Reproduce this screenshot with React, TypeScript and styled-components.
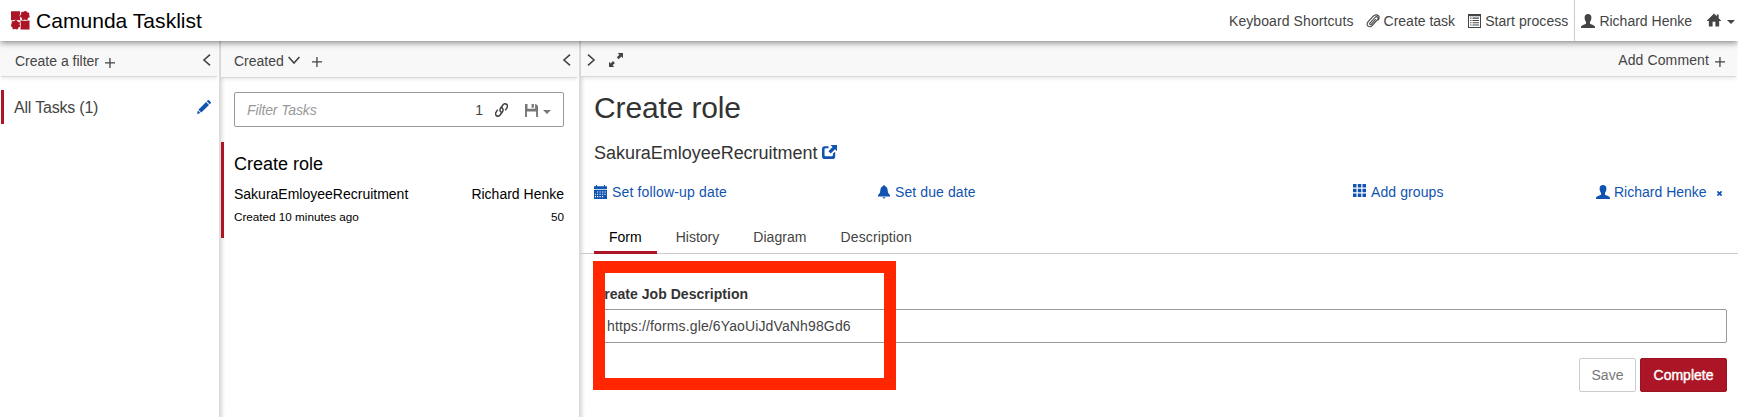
import React from 'react';
import styled, { createGlobalStyle } from 'styled-components';

const GlobalStyle = createGlobalStyle`
  *, *::before, *::after { box-sizing: border-box; }
  body {
    margin: 0;
    overflow: hidden;
    background: #fff;
    color: #333;
    font: 14px/20px "Liberation Sans", Arial, Helvetica, sans-serif;
  }
  h1, h2, h3, p { margin: 0; font-weight: normal; }
  button, input { font: inherit; }
`;

const BLUE = '#1153b0';
const RED = '#ab1526';

const Page = styled.div`
  display: flex;
  flex-direction: column;
  height: 417px;
`;

const Header = styled.header`
  position: relative;
  z-index: 3;
  display: flex;
  justify-content: space-between;
  height: 41px;
  background: #fff;
  box-shadow: 0 1px 7px rgba(0, 0, 0, 0.55);
`;

const Brand = styled.div`
  display: flex;
  align-items: center;
  padding: 1px 0 0 11px;
  gap: 6px;
  color: #000;
  font-size: 21px;
  line-height: 24px;
  letter-spacing: 0.04px;
`;

const Nav = styled.nav`
  display: flex;
  padding-right: 3px;
  color: #444;
`;

const NavItem = styled.a<{ $left?: number; $gap?: number; $divided?: boolean; $spacing?: number }>`
  display: flex;
  align-items: center;
  height: 41px;
  padding-top: 1px;
  margin-left: ${(p) => p.$left ?? 0}px;
  gap: ${(p) => p.$gap ?? 4}px;
  letter-spacing: ${(p) => p.$spacing ?? 0}px;
  white-space: nowrap;
  ${(p) => p.$divided && 'border-left: 1px solid #ccc; padding-left: 6px;'}
`;

const Columns = styled.main`
  display: flex;
  flex: 1;
  min-height: 0;
`;

const Column = styled.section<{ $width?: number }>`
  display: flex;
  flex-direction: column;
  flex: ${(p) => (p.$width ? `0 0 ${p.$width}px` : '1 1 0')};
  min-width: 0;
  & + & {
    border-left: 1px solid #dcdcdc;
    box-shadow: inset 5px 0 5px -4px rgba(0, 0, 0, 0.22);
  }
`;

const Toolbar = styled.div<{ $height?: number; $left: number; $right: number }>`
  display: flex;
  align-items: center;
  flex: none;
  height: ${(p) => p.$height ?? 36}px;
  margin: 0 2px 0 1px;
  padding: 3px ${(p) => p.$right}px 0 ${(p) => p.$left}px;
  background: #f8f8f8;
  border-bottom: 1px solid #d9d9d9;
  box-shadow: 0 2px 3px rgba(0, 0, 0, 0.08);
  color: #444;
`;

const ToolbarText = styled.span<{ $top?: number; $spacing?: number }>`
  padding-top: ${(p) => p.$top ?? 0}px;
  letter-spacing: ${(p) => p.$spacing ?? 0}px;
`;

const Spacer = styled.span`
  flex: 1;
`;

const Glyph = styled.svg<{ $ml?: number; $top?: number }>`
  display: block;
  flex: none;
  margin-left: ${(p) => p.$ml ?? 0}px;
  margin-top: ${(p) => p.$top ?? 0}px;
  fill: currentColor;
`;

const FilterRow = styled.div`
  display: flex;
  align-items: center;
  height: 34px;
  margin: 13px 0 0 1px;
  padding: 1px 8px 0 10px;
  border-left: 3px solid ${RED};
  color: #444;
  font-size: 16px;
  letter-spacing: -0.2px;
`;

const EditIcon = styled.span`
  margin-left: auto;
  padding-bottom: 2px;
  color: ${BLUE};
`;

const SearchBox = styled.div`
  display: flex;
  align-items: center;
  flex: none;
  height: 35px;
  margin: 14px 15px 0 14px;
  padding: 1px 12px 0 12px;
  border: 1px solid #999;
  border-radius: 2px;
  color: #444;
`;

const Placeholder = styled.span`
  flex: 1;
  color: #999;
  font-style: italic;
  letter-spacing: -0.12px;
`;

const Task = styled.article`
  height: 96px;
  margin: 15px 15px 0 1px;
  padding-left: 10px;
  border-left: 3px solid ${RED};
  color: #000;
`;

const TaskTitle = styled.h3`
  padding-top: 11px;
  font-size: 18px;
  line-height: 23px;
`;

const TaskLine = styled.div<{ $small?: boolean }>`
  display: flex;
  justify-content: space-between;
  height: 22px;
  margin-top: ${(p) => (p.$small ? 1 : 7)}px;
  font-size: ${(p) => (p.$small ? 11.7 : 14)}px;
  line-height: 22px;
`;

const Title = styled.h1`
  padding: 13px 0 0 14px;
  color: #333;
  font-size: 30px;
  line-height: 36px;
  letter-spacing: -0.14px;
`;

const Process = styled.h2`
  display: flex;
  align-items: center;
  padding: 14px 0 0 14px;
  gap: 5px;
  font-size: 18px;
  line-height: 26px;
  letter-spacing: -0.03px;
`;

const MetaRow = styled.div`
  display: grid;
  grid-template-columns: 284px 475px 243px 1fr;
  height: 20px;
  margin: 16px 0 0 14px;
  color: ${BLUE};
`;

const Meta = styled.a<{ $gap?: number; $spacing?: number }>`
  display: flex;
  align-items: center;
  gap: ${(p) => p.$gap ?? 5}px;
  letter-spacing: ${(p) => p.$spacing ?? 0}px;
  white-space: nowrap;
`;

const Tabs = styled.div`
  display: flex;
  height: 34px;
  margin-top: 18px;
  padding-left: 14px;
  gap: 4px;
  border-bottom: 1px solid #ccc;
`;

const Tab = styled.button<{ $active?: boolean; $spacing?: number }>`
  height: 34px;
  padding: 3px 15px 0;
  border: 0;
  border-bottom: 3px solid ${(p) => (p.$active ? RED : 'transparent')};
  background: none;
  color: ${(p) => (p.$active ? '#000' : '#444')};
  letter-spacing: ${(p) => p.$spacing ?? 0}px;
  line-height: 20px;
`;

const Form = styled.form`
  position: relative;
  padding: 30px 11px 0 14px;
`;

const Label = styled.label`
  display: block;
  font-weight: bold;
  line-height: 20px;
  letter-spacing: 0.04px;
`;

const Field = styled.input`
  display: block;
  width: 100%;
  height: 34px;
  margin-top: 5px;
  padding: 0 12px;
  border: 1px solid #999;
  border-radius: 2px;
  background: #fff;
  color: #444;
  letter-spacing: 0.13px;
`;

const Actions = styled.div`
  display: flex;
  justify-content: flex-end;
  margin-top: 15px;
  gap: 4px;
`;

const Button = styled.button<{ $primary?: boolean }>`
  width: ${(p) => (p.$primary ? 87 : 57)}px;
  height: 34px;
  padding: 0;
  border: 1px solid ${(p) => (p.$primary ? '#9c1423' : '#ccc')};
  border-radius: 2px;
  background: ${(p) => (p.$primary ? RED : '#fff')};
  color: ${(p) => (p.$primary ? '#fff' : '#777')};
  -webkit-text-stroke: ${(p) => (p.$primary ? '0.4px #fff' : '0')};
`;

const Highlight = styled.div`
  position: absolute;
  top: 7px;
  left: 13px;
  width: 303px;
  height: 129px;
  border: 12px solid #ff2600;
`;

type IconProps = { $ml?: number; $top?: number };

const LogoShape = styled(Glyph)`
  fill: ${RED};
  .halo { fill: #fff; }
  .teeth { fill: none; stroke: ${RED}; stroke-width: 1.2; stroke-dasharray: 1.9 1.91; }
`;

const Logo = () => (
  <LogoShape width="19" height="19" viewBox="0 0 19 19" $top={-1}>
    <path d="M0 .2h9.100v9H0zM9.500 9.500h9v9h-9z" />
    <circle className="halo" cx="13.900" cy="4.600" r="5.200" />
    <circle className="halo" cx="4.500" cy="13.900" r="5.200" />
    <circle cx="13.900" cy="4.600" r="4.200" />
    <circle cx="4.500" cy="13.900" r="4.200" />
    <circle className="teeth" cx="13.900" cy="4.600" r="4.250" />
    <circle className="teeth" cx="4.500" cy="13.900" r="4.250" />
  </LogoShape>
);

const Plus = (p: IconProps) => (
  <Glyph width="10" height="10" viewBox="0 0 10 10" {...p}>
    <path d="M4.300 0h1.300v4.300H10v1.300H5.600V10H4.300V5.600H0V4.300h4.300z" />
  </Glyph>
);

const Chevron = ({ turn, ...p }: IconProps & { turn: number }) => (
  <Glyph width="12" height="12" viewBox="0 0 12 12" {...p}>
    <path
      d="M9 .6 3 6l6 5.400"
      transform={`rotate(${turn} 6 6)`}
      fill="none"
      stroke="currentColor"
      strokeWidth="1.600"
    />
  </Glyph>
);

const Caret = (p: IconProps) => (
  <Glyph width="8" height="4" viewBox="0 0 8 4" {...p}>
    <path d="M0 0h8L4 4z" />
  </Glyph>
);

const User = (p: IconProps) => (
  <Glyph width="14" height="14" viewBox="0 0 14 14" {...p}>
    <path d="M7 0c2.200 0 3.400 1.400 3.400 3.600C10.400 6 9.600 7 9 7.900v1.400c0 .6.4.8 1 1 2 .8 4 1.400 4 2.700v1H0v-1c0-1.300 2-1.900 4-2.700.6-.2 1-.4 1-1V7.900C4.400 7 3.600 6 3.600 3.600 3.600 1.400 4.800 0 7 0z" />
  </Glyph>
);

const Paperclip = () => (
  <Glyph width="15" height="14" viewBox="0 0 15 14" $top={-1}>
    <path
      d="M10.800 5.200 6.300 10.300c-.9 1-2.200-.2-1.300-1.200L10 3.500c1.700-1.900 4.200.2 2.500 2.200L7.400 11.300c-2.800 3.100-7.500.2-4.200-3.700L8 2.400c2.600-2.800 7.400-1.500 5.800 2.700l-1.100 1.400"
      fill="none"
      stroke="currentColor"
      strokeWidth="1.100"
    />
  </Glyph>
);

const ListAlt = () => (
  <Glyph width="13" height="14" viewBox="0 0 13 14" $top={-1}>
    <path fillRule="evenodd" d="M0 0h13v14H0zM1 2.300v10.700h11V2.300z" />
    <path d="M2.200 3.600h1.300v1.100H2.200zM4.500 3.600H11v1.100H4.500zM2.200 5.900h1.300V7H2.200zM4.500 5.900H11V7H4.500zM2.200 8.200h1.300v1.100H2.200zM4.500 8.200H11v1.100H4.500zM2.200 10.500h1.300v1.100H2.200zM4.500 10.500H11v1.100H4.500z" />
  </Glyph>
);

const Home = () => (
  <Glyph width="14" height="14" viewBox="0 0 15 14" $top={-2}>
    <path d="M7.500 0 10.500 3V1h2v4L15 7.600V8h-2v6H9V9H6v5H2V8H0v-.4z" />
  </Glyph>
);

const Pencil = () => (
  <Glyph width="14" height="14" viewBox="0 0 14 14">
    <path d="m11.900.3 1.800 1.800c.4.4.4.7 0 1.100l-1 1L9.800 1.300l1-1c.4-.4.7-.4 1.100 0zM9.100 2 12 4.900l-7.700 7.700-2.900-2.900zM.9 10.500l2.600 2.600L0 14z" />
  </Glyph>
);

const Link = () => (
  <Glyph width="13" height="14" viewBox="0 0 13 14" $ml={12}>
    <g fill="none" stroke="currentColor" strokeWidth="1.500">
      <path d="M7.300 9.700C5 9 4.300 7.200 5.600 5.200L7.900 2c2-2.700 5.900-.2 4.100 2.700L10.300 7.300" />
      <path d="M5.700 4.300C8 5 8.700 6.800 7.400 8.800L5.100 12C3.100 14.700-.8 12.200 1 9.300L2.700 6.700" />
    </g>
  </Glyph>
);

const Floppy = () => (
  <Glyph width="13" height="13" viewBox="0 0 13 13" $ml={17}>
    <path d="M0 0h2.500v4.700h7.600V0H11l2 2v11h-1.900V7.500H1.900V13H0zM6.600 0h2.300v3.700H6.600z" />
  </Glyph>
);

const SaveMenu = styled.span`
  display: flex;
  align-items: center;
  color: #777;
`;

const Expand = () => (
  <Glyph width="14" height="14" viewBox="0 0 14 14" $ml={12} $top={-1}>
    <path d="M8.700 0H14v5.300l-1.700-1.700-2.600 2.600-1.900-1.900 2.600-2.600zM0 14V8.700l1.700 1.700 2.300-2.300L5.900 10l-2.300 2.300L5.300 14z" />
  </Glyph>
);

const External = () => (
  <Glyph width="15" height="14" viewBox="0 0 15 14" $top={-2} style={{ fill: BLUE }}>
    <path d="M8.500 0H15v6.300l-2-2-4.300 4.300-2.300-2.300 4.200-4.200z" />
    <path d="M6.500 1.200v2H3.700q-1.200 0-1.200 1.200v5.600q0 1.300 1.200 1.300h6q1.200 0 1.200-1.300V8.600l2.300-1.800v4.400Q13.200 14 10.500 14H2.800Q0 14 0 11.200V4q0-2.800 2.800-2.800z" />
  </Glyph>
);

const Calendar = () => (
  <Glyph width="13" height="14" viewBox="0 0 13 14" $top={-1}>
    <path
      fillRule="evenodd"
      d="M0 1.200h2V0h1v1.200h7V0h1v1.200h2v3H0zM0 5h13v9H0zM3 6.500v1h1.200v-1zm2.500 0v1h1.200v-1zm2.500 0v1h1.200v-1zm2.500 0v1h1.200v-1zM1 8.700v1h1v-1zm2 0v1h1.200v-1zm2.500 0v1h1.200v-1zm2.500 0v1h1.200v-1zm2.500 0v1h1.200v-1zM1 11v1.200h1V11zm2 0v1.200h1.200V11zm2.500 0v1.200h1.200V11zM8 11v1.200h1.200V11z"
    />
  </Glyph>
);

const Bell = () => (
  <Glyph width="12" height="14" viewBox="0 0 12 14" $top={-1}>
    <path d="M5.200 1q0-1 .8-1t.8 1C9 1.500 9.500 3.500 9.700 5.600 9.900 8 10.400 8.700 12 10v1.500H0V10c1.600-1.300 2.100-2 2.300-4.400C2.500 3.500 3 1.500 5.200 1zM4.500 12.300h3Q7 13.600 6 13.600t-1.500-1.300z" />
  </Glyph>
);

const Grid = () => (
  <Glyph width="13" height="13" viewBox="0 0 13 13" $top={-3}>
    <path d="M0 0h3.500v3.500H0zM4.800 0h3.500v3.500H4.800zM9.500 0H13v3.500H9.500zM0 4.800h3.500v3.500H0zM4.800 4.800h3.500v3.500H4.800zM9.500 4.800H13v3.500H9.500zM0 9.500h3.500V13H0zM4.800 9.500h3.500V13H4.800zM9.500 9.500H13V13H9.500z" />
  </Glyph>
);

const Remove = () => (
  <Glyph width="5" height="5" viewBox="0 0 5 5" $ml={6} $top={3}>
    <path d="m.4.4 4.200 4.200m0-4.200L.4 4.600" stroke="currentColor" strokeWidth="1.700" />
  </Glyph>
);

export default function App() {
  return (
    <Page>
      <GlobalStyle />
      <Header>
        <Brand>
          <Logo />
          <span>Camunda Tasklist</span>
        </Brand>
        <Nav>
          <NavItem $spacing={0.09}>Keyboard Shortcuts</NavItem>
          <NavItem $left={11}><Paperclip />Create task</NavItem>
          <NavItem $left={13} $spacing={0.06}><ListAlt />Start process</NavItem>
          <NavItem $left={6} $divided><User $top={-1} />Richard Henke</NavItem>
          <NavItem $left={15} $gap={6}><Home /><Caret $top={2} /></NavItem>
        </Nav>
      </Header>
      <Columns>
        <Column $width={219}>
          <Toolbar $left={14} $right={4}>
            <ToolbarText $top={2}>Create a filter</ToolbarText>
            <Plus $ml={6} $top={5} />
            <Spacer />
            <Chevron turn={0} $top={-1} />
          </Toolbar>
          <FilterRow>
            All Tasks (1)
            <EditIcon><Pencil /></EditIcon>
          </FilterRow>
        </Column>
        <Column $width={360}>
          <Toolbar $height={37} $left={13} $right={4}>
            <ToolbarText>Created</ToolbarText>
            <Chevron turn={-90} $ml={4} $top={-1} />
            <Plus $ml={12} $top={3} />
            <Spacer />
            <Chevron turn={0} $top={-1} />
          </Toolbar>
          <SearchBox>
            <Placeholder>Filter Tasks</Placeholder>
            <span>1</span>
            <Link />
            <SaveMenu>
              <Floppy />
              <Caret $ml={5} $top={3} />
            </SaveMenu>
          </SearchBox>
          <Task>
            <TaskTitle>Create role</TaskTitle>
            <TaskLine>
              <span>SakuraEmloyeeRecruitment</span>
              <span>Richard Henke</span>
            </TaskLine>
            <TaskLine $small>
              <span>Created 10 minutes ago</span>
              <span>50</span>
            </TaskLine>
          </Task>
        </Column>
        <Column>
          <Toolbar $left={4} $right={11}>
            <Chevron turn={180} $top={-1} />
            <Expand />
            <Spacer />
            <ToolbarText $spacing={0.12}>Add Comment</ToolbarText>
            <Plus $ml={6} $top={4} />
          </Toolbar>
          <Title>Create role</Title>
          <Process>SakuraEmloyeeRecruitment<External /></Process>
          <MetaRow>
            <Meta $spacing={0.16}><Calendar />Set follow-up date</Meta>
            <Meta $spacing={0.1}><Bell />Set due date</Meta>
            <Meta $spacing={0.1}><Grid />Add groups</Meta>
            <Meta $gap={4}><User $top={-1} />Richard Henke<Remove /></Meta>
          </MetaRow>
          <Tabs>
            <Tab $active>Form</Tab>
            <Tab>History</Tab>
            <Tab $spacing={0.06}>Diagram</Tab>
            <Tab $spacing={0.12}>Description</Tab>
          </Tabs>
          <Form>
            <Label htmlFor="job">Create Job Description</Label>
            <Field id="job" defaultValue="https://forms.gle/6YaoUiJdVaNh98Gd6" />
            <Actions>
              <Button type="button">Save</Button>
              <Button type="button" $primary>Complete</Button>
            </Actions>
            <Highlight />
          </Form>
        </Column>
      </Columns>
    </Page>
  );
}
